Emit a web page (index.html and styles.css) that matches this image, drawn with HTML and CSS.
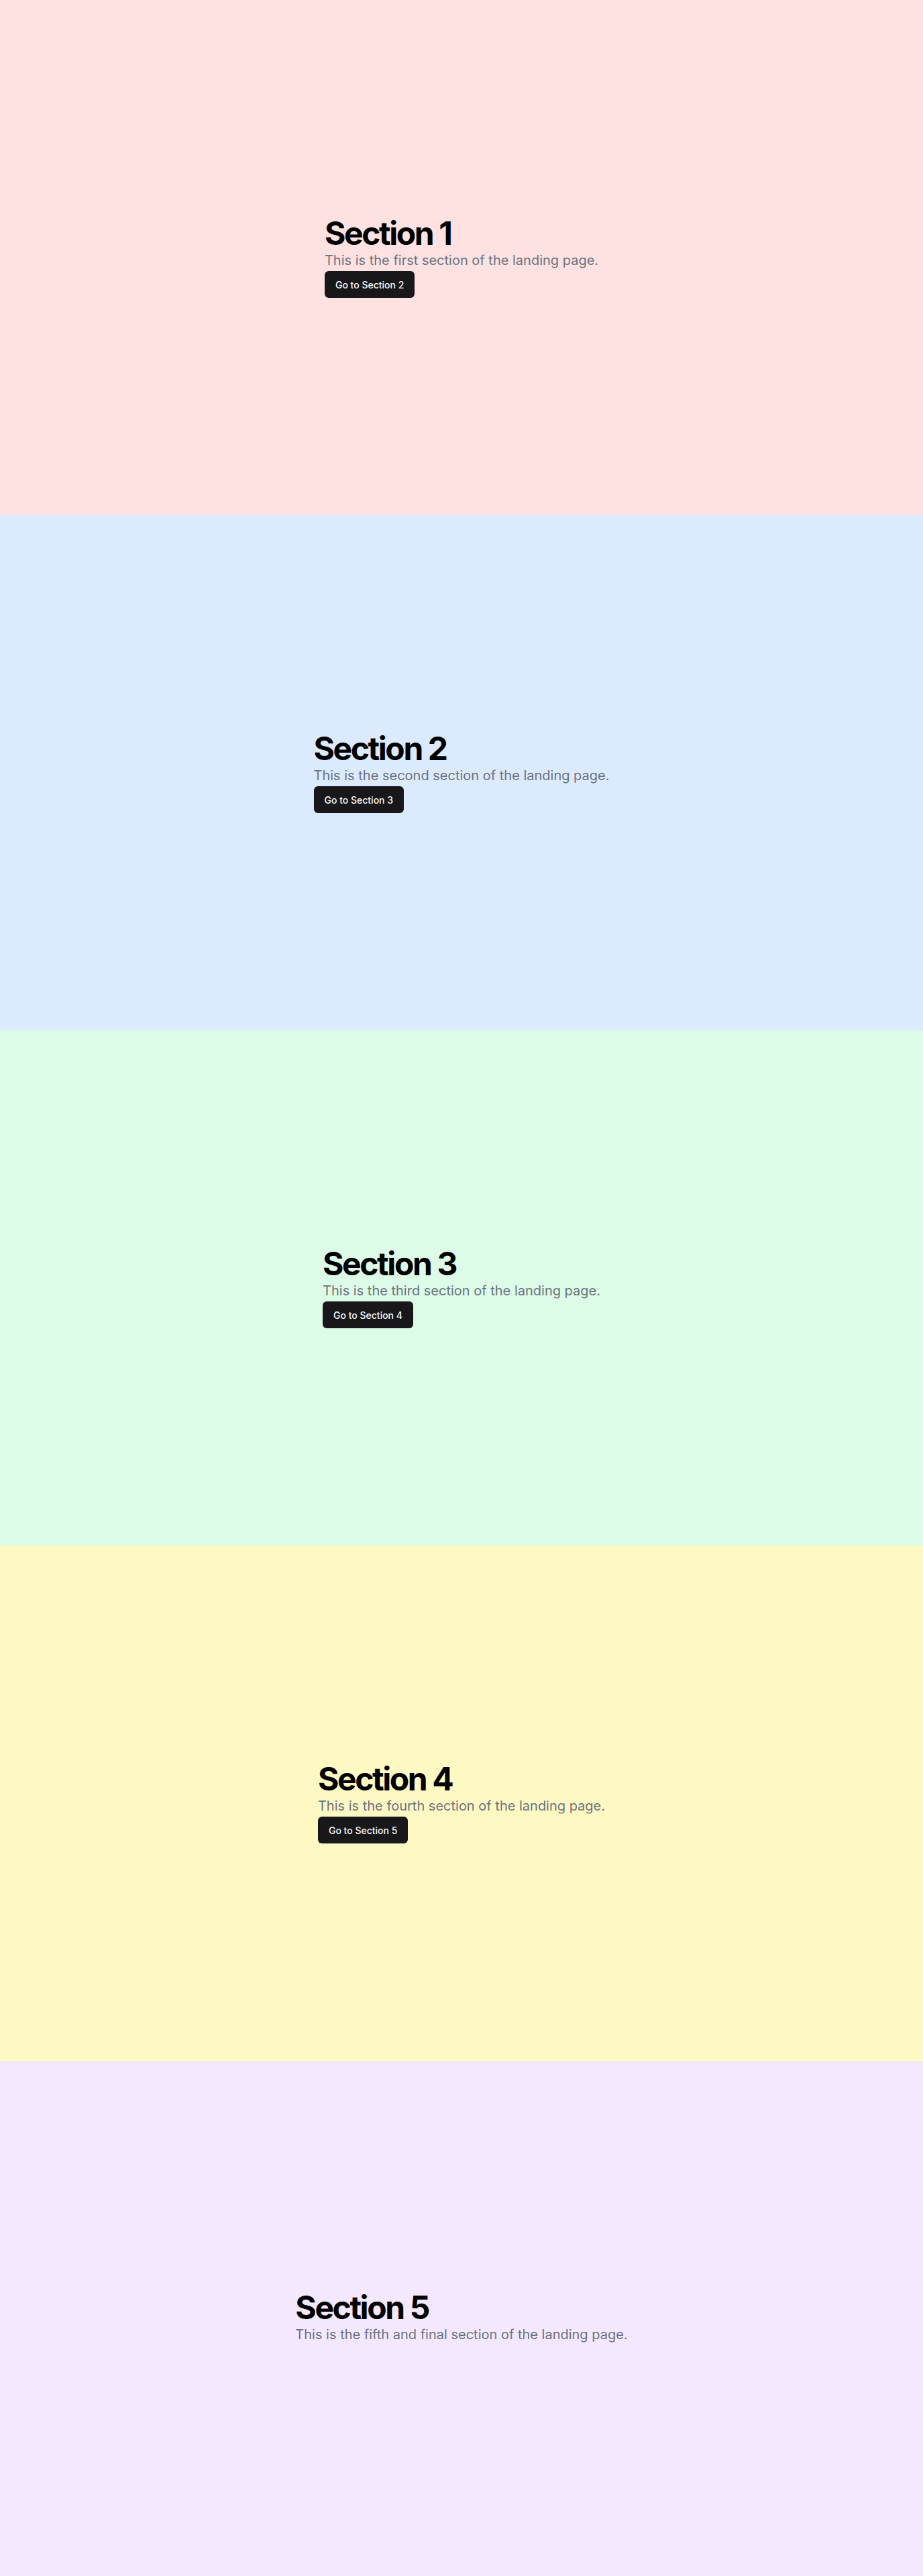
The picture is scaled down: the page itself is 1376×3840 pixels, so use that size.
FILE: index.html
```html
<!DOCTYPE html>
<html lang="en">
<head>
<meta charset="utf-8">
<title>Landing</title>
<link rel="stylesheet" href="styles.css">
</head>
<body>
<main class="page">
  <section class="section s1">
    <div class="content">
      <h1 class="title">Section 1</h1>
      <p class="lead">This is the first section of the landing page.</p>
      <a class="btn" href="#s2">Go to Section 2</a>
    </div>
  </section>
  <section class="section s2" id="s2">
    <div class="content">
      <h1 class="title">Section 2</h1>
      <p class="lead">This is the second section of the landing page.</p>
      <a class="btn" href="#s3">Go to Section 3</a>
    </div>
  </section>
  <section class="section s3" id="s3">
    <div class="content">
      <h1 class="title">Section 3</h1>
      <p class="lead">This is the third section of the landing page.</p>
      <a class="btn" href="#s4">Go to Section 4</a>
    </div>
  </section>
  <section class="section s4" id="s4">
    <div class="content">
      <h1 class="title">Section 4</h1>
      <p class="lead">This is the fourth section of the landing page.</p>
      <a class="btn" href="#s5">Go to Section 5</a>
    </div>
  </section>
  <section class="section s5" id="s5">
    <div class="content">
      <h1 class="title">Section 5</h1>
      <p class="lead">This is the fifth and final section of the landing page.</p>
    </div>
  </section>
</main>
</body>
</html>
```
FILE: styles.css
```css
* { box-sizing: border-box; }
html, body { margin: 0; padding: 0; }
body { font-family: Inter, "Noto Sans", sans-serif; color: #09090b; }
.page { display: flex; flex-direction: column; }
.section {
  height: 768px;
  display: flex;
  align-items: center;
  justify-content: center;
}
.s1 { background: #fee2e2; }
.s2 { background: #dbeafe; }
.s3 { background: #dcfce7; }
.s4 { background: #fef9c3; }
.s5 { background: #f3e8ff; }
.content { display: flex; flex-direction: column; align-items: flex-start; }
.title {
  margin: 0;
  font-size: 48px;
  line-height: 1;
  font-weight: 700;
  letter-spacing: -0.05em;
  color: #000;
}
.lead {
  margin: 0;
  font-size: 20px;
  line-height: 32px;
  color: #6b7280;
}
.btn {
  display: inline-flex;
  align-items: center;
  justify-content: center;
  height: 40px;
  padding: 0 16px;
  border-radius: 6px;
  background: #18181b;
  color: #fafafa;
  font-size: 14px;
  font-weight: 500;
  text-decoration: none;
}
```
